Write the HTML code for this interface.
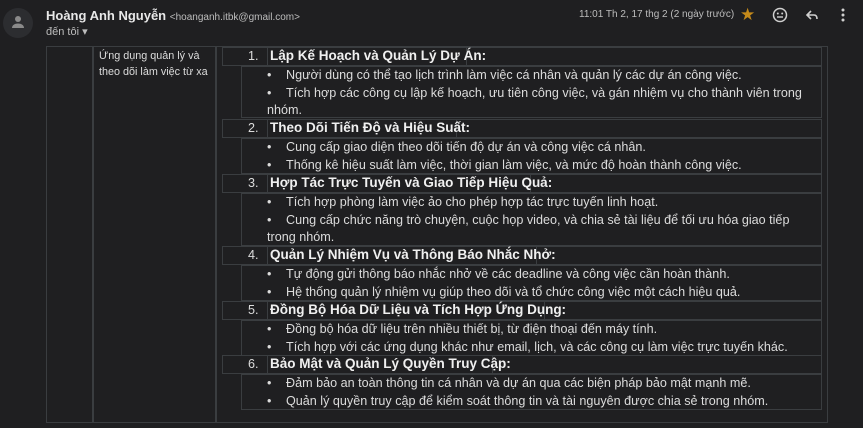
<!DOCTYPE html>
<html><head><meta charset="utf-8"><style>
body{margin:0;width:863px;height:428px;background:#1f1f21;overflow:hidden;font-family:"Liberation Sans","DejaVu Sans",sans-serif;color:#e3e3e3;position:relative}
.a{position:absolute;white-space:nowrap}
.b{position:absolute;border:1px solid #3a3d40;box-sizing:border-box}
.h{font-size:13.5px;font-weight:bold;color:#f0f0f0}
.t{font-size:12.6px;color:#dcdcdc}
.u{display:inline-block;width:19px}
</style></head><body>
<div class="a" style="left:3px;top:8px;width:30px;height:30px;border-radius:50%;background:#2c2d30"></div>
<svg class="a" style="left:10px;top:14px" width="16" height="16" viewBox="0 0 16 16"><circle cx="8" cy="5" r="3" fill="#8a8a8a"/><path d="M2 14c0-3 3-4.5 6-4.5s6 1.5 6 4.5z" fill="#8a8a8a"/></svg>
<div class="a" style="left:46px;top:8px;font-size:13px;font-weight:bold;color:#e8e8e8">Hoàng Anh Nguyễn <span style="font-weight:normal;font-size:10px;color:#bdbdbd">&lt;hoanganh.itbk@gmail.com&gt;</span></div>
<div class="a" style="left:46px;top:25px;font-size:11px;color:#bdbdbd">đến tôi ▾</div>
<div class="a" style="left:579px;top:9px;font-size:10px;color:#bdbdbd">11:01 Th 2, 17 thg 2 (2 ngày trước)</div>
<div class="a" style="left:740px;top:5px;font-size:17px;color:#c58a1a">★</div>
<svg class="a" style="left:772px;top:7px" width="16" height="16" viewBox="0 0 16 16"><circle cx="8" cy="8" r="6.5" fill="none" stroke="#d0d0d0" stroke-width="1.5"/><circle cx="5.8" cy="6.5" r="1" fill="#d0d0d0"/><circle cx="10.2" cy="6.5" r="1" fill="#d0d0d0"/><path d="M5 10h6" stroke="#d0d0d0" stroke-width="1.4"/></svg>
<svg class="a" style="left:805px;top:8px" width="14" height="14" viewBox="0 0 14 14"><path d="M6 3L2 7l4 4M2 7h7c2 0 3 1.5 3 4" fill="none" stroke="#d0d0d0" stroke-width="1.6"/></svg>
<svg class="a" style="left:840px;top:7px" width="6" height="16" viewBox="0 0 6 16"><circle cx="3" cy="3" r="1.5" fill="#d0d0d0"/><circle cx="3" cy="8" r="1.5" fill="#d0d0d0"/><circle cx="3" cy="13" r="1.5" fill="#d0d0d0"/></svg>

<div class="b" style="left:46px;top:46px;width:782px;height:377px"></div>
<div class="b" style="left:92px;top:46px;width:1px;height:377px"></div>
<div class="b" style="left:215px;top:46px;width:1px;height:377px"></div>
<div class="a" style="left:99px;top:48px;font-size:10.8px;line-height:16px;color:#dcdcdc">Ứng dụng quản lý và<br>theo dõi làm việc từ xa</div>

<div class="b" style="left:222px;top:47px;width:600px;height:19px"></div>
<div class="b" style="left:267px;top:47px;width:200px;height:19px"></div>
<div class="a t" style="left:248px;top:49px">1.</div>
<div class="a h" style="left:270px;top:48px">Lập Kế Hoạch và Quản Lý Dự Án:</div>
<div class="b" style="left:241px;top:66px;width:581px;height:52px"></div>
<div class="a t" style="left:267px;top:67px;line-height:17.5px"><span class="u">•</span>Người dùng có thể tạo lịch trình làm việc cá nhân và quản lý các dự án công việc.<br><span class="u">•</span>Tích hợp các công cụ lập kế hoạch, ưu tiên công việc, và gán nhiệm vụ cho thành viên trong<br>nhóm.</div>

<div class="b" style="left:222px;top:119px;width:600px;height:19px"></div>
<div class="b" style="left:267px;top:119px;width:190px;height:19px"></div>
<div class="a t" style="left:248px;top:121px">2.</div>
<div class="a h" style="left:270px;top:120px">Theo Dõi Tiến Độ và Hiệu Suất:</div>
<div class="b" style="left:241px;top:138px;width:581px;height:36px"></div>
<div class="a t" style="left:267px;top:139px;line-height:17.5px"><span class="u">•</span>Cung cấp giao diện theo dõi tiến độ dự án và công việc cá nhân.<br><span class="u">•</span>Thống kê hiệu suất làm việc, thời gian làm việc, và mức độ hoàn thành công việc.</div>

<div class="b" style="left:222px;top:174px;width:600px;height:19px"></div>
<div class="b" style="left:267px;top:174px;width:264px;height:19px"></div>
<div class="a t" style="left:248px;top:176px">3.</div>
<div class="a h" style="left:270px;top:175px">Hợp Tác Trực Tuyến và Giao Tiếp Hiệu Quả:</div>
<div class="b" style="left:241px;top:193px;width:581px;height:53px"></div>
<div class="a t" style="left:267px;top:194px;line-height:17.5px"><span class="u">•</span>Tích hợp phòng làm việc ảo cho phép hợp tác trực tuyến linh hoạt.<br><span class="u">•</span>Cung cấp chức năng trò chuyện, cuộc họp video, và chia sẻ tài liệu để tối ưu hóa giao tiếp<br>trong nhóm.</div>

<div class="b" style="left:222px;top:246px;width:600px;height:19px"></div>
<div class="b" style="left:267px;top:246px;width:270px;height:19px"></div>
<div class="a t" style="left:248px;top:248px">4.</div>
<div class="a h" style="left:270px;top:247px">Quản Lý Nhiệm Vụ và Thông Báo Nhắc Nhở:</div>
<div class="b" style="left:241px;top:265px;width:581px;height:36px"></div>
<div class="a t" style="left:267px;top:266px;line-height:17.5px"><span class="u">•</span>Tự động gửi thông báo nhắc nhở về các deadline và công việc cần hoàn thành.<br><span class="u">•</span>Hệ thống quản lý nhiệm vụ giúp theo dõi và tổ chức công việc một cách hiệu quả.</div>

<div class="b" style="left:222px;top:301px;width:600px;height:19px"></div>
<div class="b" style="left:267px;top:301px;width:278px;height:19px"></div>
<div class="a t" style="left:248px;top:303px">5.</div>
<div class="a h" style="left:270px;top:302px">Đồng Bộ Hóa Dữ Liệu và Tích Hợp Ứng Dụng:</div>
<div class="b" style="left:241px;top:320px;width:581px;height:36px"></div>
<div class="a t" style="left:267px;top:321px;line-height:17.5px"><span class="u">•</span>Đồng bộ hóa dữ liệu trên nhiều thiết bị, từ điện thoại đến máy tính.<br><span class="u">•</span>Tích hợp với các ứng dụng khác như email, lịch, và các công cụ làm việc trực tuyến khác.</div>

<div class="b" style="left:222px;top:355px;width:600px;height:19px"></div>
<div class="b" style="left:267px;top:355px;width:226px;height:19px"></div>
<div class="a t" style="left:248px;top:357px">6.</div>
<div class="a h" style="left:270px;top:356px">Bảo Mật và Quản Lý Quyền Truy Cập:</div>
<div class="b" style="left:241px;top:374px;width:581px;height:36px"></div>
<div class="a t" style="left:267px;top:375px;line-height:17.5px"><span class="u">•</span>Đảm bảo an toàn thông tin cá nhân và dự án qua các biện pháp bảo mật mạnh mẽ.<br><span class="u">•</span>Quản lý quyền truy cập để kiểm soát thông tin và tài nguyên được chia sẻ trong nhóm.</div>
</body></html>
